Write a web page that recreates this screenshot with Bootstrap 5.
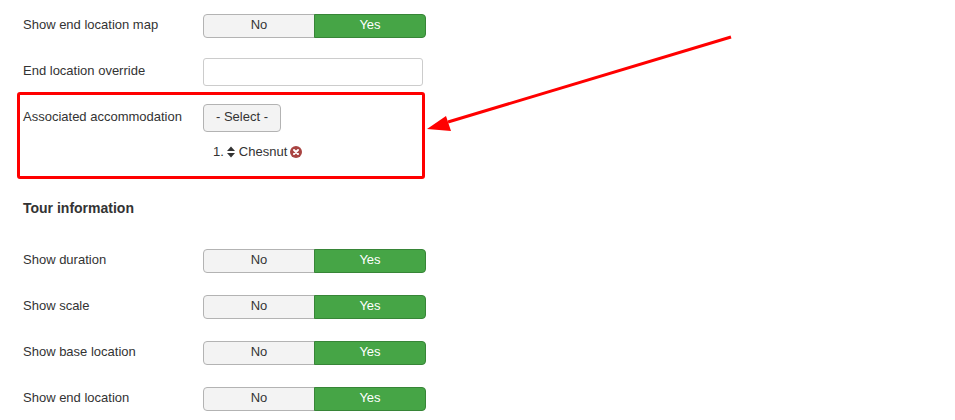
<!DOCTYPE html>
<html lang="en">
<head>
    <meta charset="UTF-8">
    <meta name="viewport" content="width=device-width, initial-scale=1.0">
    <title>Tour options</title>
    <link href="https://cdn.jsdelivr.net/npm/bootstrap@5.3.0/dist/css/bootstrap.min.css" rel="stylesheet">
    <style>
        body { font-family: "Liberation Sans", Arial, sans-serif; font-size: 13px; color: #333; background: #fff; overflow: hidden; }
        .opts-page { padding: 14px 0 0 23px; height: 420px; }
        .opt-row { margin-bottom: 22px; }
        .opt-first { margin-bottom: 20px; }
        .opt-label { width: 180px; flex: none; line-height: 20px; padding-top: 1px; }
        .yn-group { width: 223px; height: 24px; }
        .yn-group .btn { font-size: 13px; line-height: 20px; padding: 0 0 2px; border-radius: 4px; }
        .yn-no, .yn-no:hover { width: 112px; flex: none !important; background: #f3f3f3; border-color: #b3b3b3; color: #333; }
        .yn-yes, .yn-yes:hover { background: #46a546; border-color: #378537; color: #fff; }
        .opt-input { width: 220px; height: 28px; font-size: 13px; padding: 4px 6px; border-color: #ccc; border-radius: 3px; }
        .row-text { margin-bottom: 18px; }
        .row-text .opt-label { padding-top: 3px; }
        .select-btn, .select-btn:hover { font-size: 13px; line-height: 18px; width: 78px; height: 28px; padding: 3px 0 5px; background: #f3f3f3; border-color: #b3b3b3; color: #333; border-radius: 4px; }
        .row-assoc { margin-bottom: 0; }
        .row-assoc .opt-label { padding-top: 3px; }
        .assoc-item { margin: 11px 0 0 10px; line-height: 18px; gap: 3px; }
        .assoc-name { margin-left: 1px; }
        .tour-title { font-size: 14px; font-weight: 700; line-height: 20px; margin: 37px 0 31px; color: #333; }
        .note-box { position: absolute; left: 17px; top: 92px; width: 408px; height: 87px; border: 3px solid #f00; border-radius: 3px; pointer-events: none; }
        .note-arrow { position: absolute; left: 420px; top: 30px; }
    </style>
</head>
<body>
    <div class="opts-page position-relative">
        <div class="d-flex opt-row opt-first">
            <div class="opt-label">Show end location map</div>
            <div class="btn-group yn-group"><button type="button" class="btn yn-no">No</button><button type="button" class="btn yn-yes">Yes</button></div>
        </div>
        <div class="d-flex opt-row row-text">
            <div class="opt-label">End location override</div>
            <input type="text" class="form-control opt-input">
        </div>
        <div class="d-flex opt-row row-assoc">
            <div class="opt-label">Associated accommodation</div>
            <div>
                <button type="button" class="btn select-btn">- Select -</button>
                <div class="assoc-item d-flex align-items-center">
                    <span>1.</span>
                    <svg width="8" height="12" viewBox="0 0 8 12"><path d="M4 0.5 8 5H0Z M0 7H8L4 11.5Z" fill="#333"/></svg>
                    <span class="assoc-name">Chesnut</span>
                    <svg width="12" height="12" viewBox="0 0 12 12"><circle cx="6" cy="6" r="6" fill="#a94442"/><path d="M4 4 8 8M8 4 4 8" stroke="#fff" stroke-width="2" stroke-linecap="round"/></svg>
                </div>
            </div>
        </div>
        <h2 class="tour-title">Tour information</h2>
        <div class="d-flex opt-row">
            <div class="opt-label">Show duration</div>
            <div class="btn-group yn-group"><button type="button" class="btn yn-no">No</button><button type="button" class="btn yn-yes">Yes</button></div>
        </div>
        <div class="d-flex opt-row">
            <div class="opt-label">Show scale</div>
            <div class="btn-group yn-group"><button type="button" class="btn yn-no">No</button><button type="button" class="btn yn-yes">Yes</button></div>
        </div>
        <div class="d-flex opt-row">
            <div class="opt-label">Show base location</div>
            <div class="btn-group yn-group"><button type="button" class="btn yn-no">No</button><button type="button" class="btn yn-yes">Yes</button></div>
        </div>
        <div class="d-flex opt-row">
            <div class="opt-label">Show end location</div>
            <div class="btn-group yn-group"><button type="button" class="btn yn-no">No</button><button type="button" class="btn yn-yes">Yes</button></div>
        </div>

        <!-- annotation drawn over the form -->
        <div class="note-box"></div>
        <svg class="note-arrow" width="320" height="110" viewBox="0 0 320 110">
            <path d="M311 7 28 92" stroke="#f00" stroke-width="3" fill="none"/>
            <path d="M7 99 26 86 31 101Z" fill="#f00"/>
        </svg>
    </div>
    <script src="https://cdn.jsdelivr.net/npm/bootstrap@5.3.0/dist/js/bootstrap.bundle.min.js"></script>
</body>
</html>
